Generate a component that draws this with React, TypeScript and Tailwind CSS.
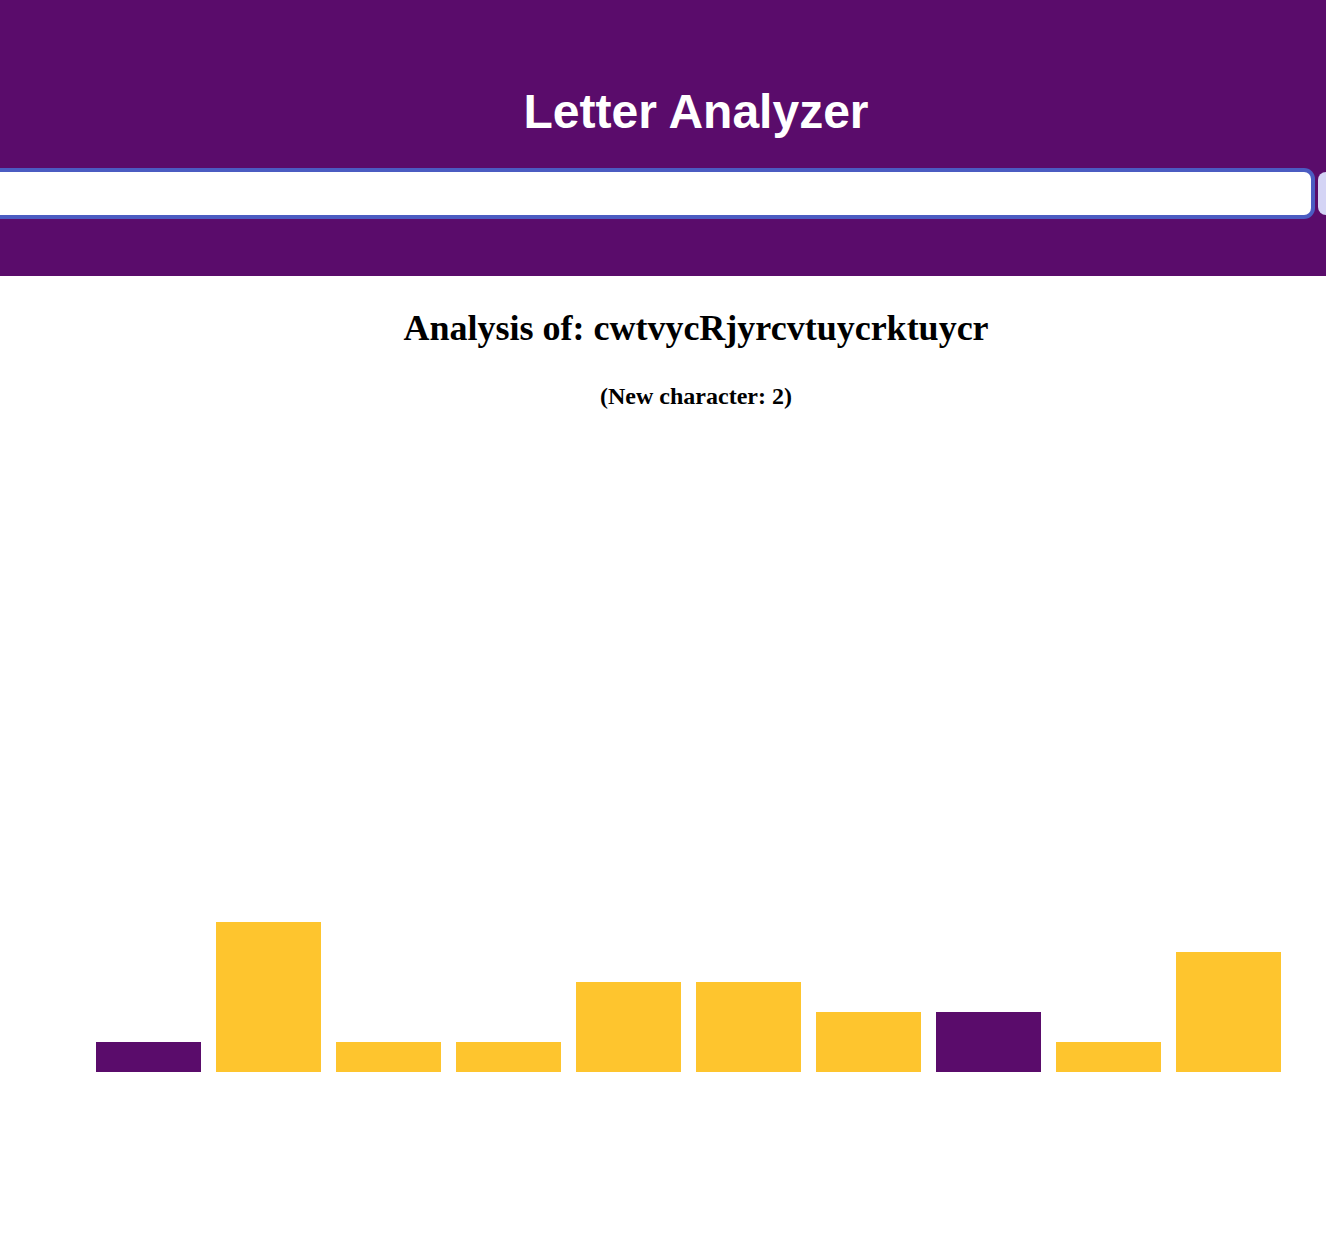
import React from 'react';

const counts = [
  { n: 1, hot: true },
  { n: 5, hot: false },
  { n: 1, hot: false },
  { n: 1, hot: false },
  { n: 3, hot: false },
  { n: 3, hot: false },
  { n: 2, hot: false },
  { n: 2, hot: true },
  { n: 1, hot: false },
  { n: 4, hot: false },
];

export default function App() {
  return (
    <div className="w-full min-h-screen overflow-hidden bg-white">
      <div className="w-[1392px]">
        <header className="h-[276px] bg-[#5a0c6b] pt-[84px]">
          <h1 className="text-center text-[48px] leading-[55px] font-bold text-white font-['Liberation_Sans',Arial,sans-serif]">
            Letter Analyzer
          </h1>
          <div className="mt-[33px] ml-[-30px] flex items-center gap-[7px]">
            <input
              className="h-[43px] w-[1341px] shrink-0 rounded-[7px] bg-white px-3 outline-none ring-[4px] ring-[#4b5cc2]"
              defaultValue=""
            />
            <button className="h-[43px] w-[80px] shrink-0 rounded-[8px] bg-[#d4d4f5]" />
          </div>
        </header>

        <main className="font-['Liberation_Serif','Times_New_Roman',serif] text-black">
          <h2 className="mt-[32px] text-center text-[36px] leading-[40px] font-bold">
            Analysis of: cwtvycRjyrcvtuycrktuycr
          </h2>
          <h3 className="mt-[35px] text-center text-[24px] leading-[27px] font-bold">
            (New character: 2)
          </h3>

          <div className="mx-auto flex h-[662px] w-[1200px] items-end gap-[15px]">
            {counts.map((c, i) => (
              <div
                key={i}
                className={c.hot ? 'w-[105px] bg-[#5a0c6b]' : 'w-[105px] bg-[#fec52e]'}
                style={{ height: c.n * 30 }}
              />
            ))}
          </div>
        </main>
      </div>
    </div>
  );
}
